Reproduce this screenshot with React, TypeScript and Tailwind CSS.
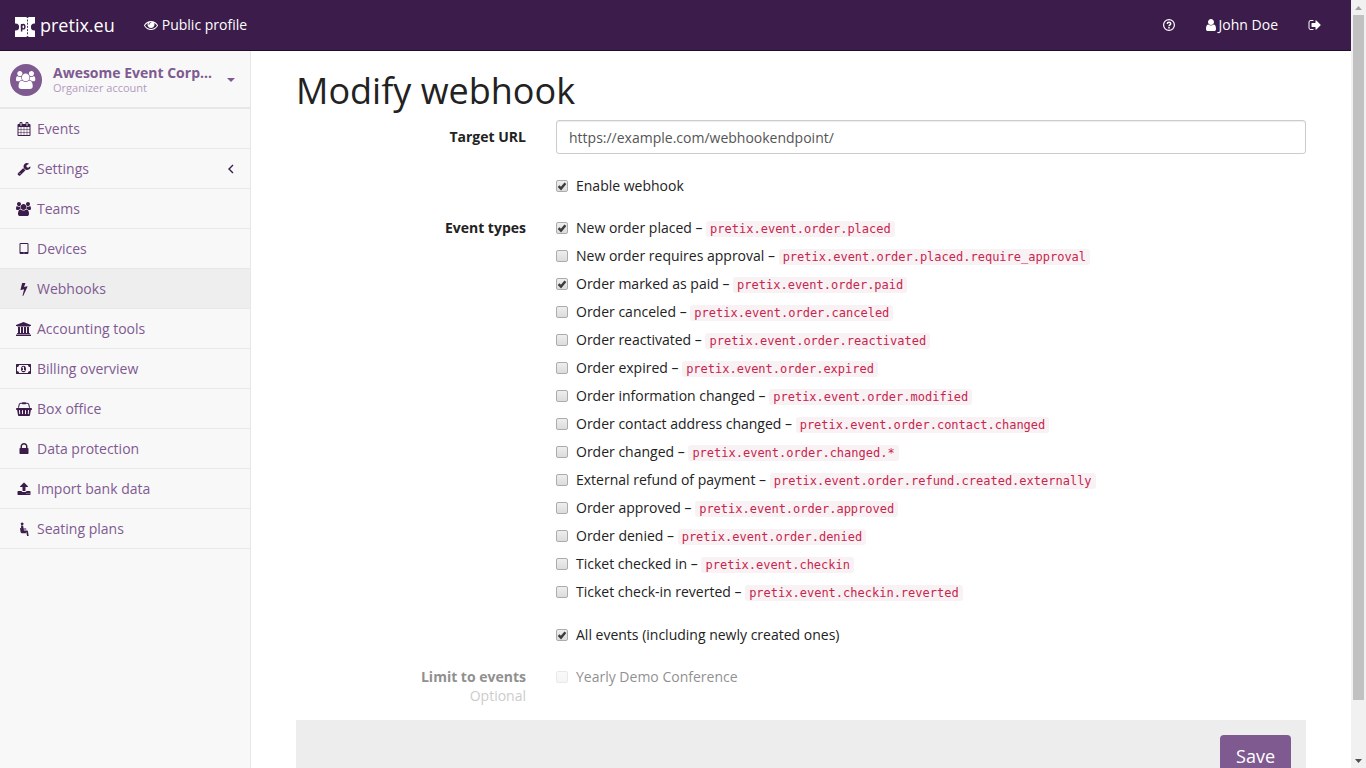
import React from "react";

type Glyph = { w?: number; d: string };

const glyphs: Record<string, Glyph> = {
  user: { w: 1536, d: "M1408 1399q0 109-62.5 187t-150.5 78h-854q-88 0-150.5-78t-62.5-187q0-85 8.5-160.5t31.5-152 58.5-131 94-89 134.5-34.5q131 128 313 128t313-128q76 0 134.5 34.500t94 89 58.500 131 31.500 152 8.500 160.500zm-256-887q0 159-112.500 271.500t-271.500 112.500-271.500-112.500-112.500-271.500 112.500-271.500 271.500-112.500 271.500 112.500 112.500 271.500z" },
  eye: { d: "M1664 960q-152-236-381-353 61 104 61 225 0 185-131.5 316.5t-316.5 131.5-316.5-131.5-131.5-316.5q0-121 61-225-229 117-381 353 133 205 333.5 326.5t434.5 121.5 434.5-121.5 333.5-326.5zm-720-384q0-20-14-34t-34-14q-125 0-214.5 89.5t-89.5 214.5q0 20 14 34t34 14 34-14 14-34q0-86 61-147t147-61q20 0 34-14t14-34zm848 384q0 34-20 69-140 230-376.5 368.5t-499.5 138.5-499.5-139-376.5-368q-20-35-20-69t20-69q140-229 376.5-368t499.5-139 499.5 139 376.5 368q20 35 20 69z" },
  signOut: { d: "M704 1440q0 4 1 20t.5 26.5-3 23.5-10 19.5-20.5 6.5h-320q-119 0-203.5-84.5t-84.5-203.5v-704q0-119 84.5-203.5t203.5-84.5h320q13 0 22.5 9.5t9.5 22.5q0 4 1 20t.5 26.5-3 23.5-10 19.5-20.5 6.5h-320q-66 0-113 47t-47 113v704q0 66 47 113t113 47h312l11.5 1 11.5 3 8 5.5 7 9 2 13.5zm928-544q0 26-19 45l-544 544q-19 19-45 19t-45-19-19-45v-288h-448q-26 0-45-19t-19-45v-384q0-26 19-45t45-19h448v-288q0-26 19-45t45-19 45 19l544 544q19 19 19 45z" },
  calendar: { d: "M192 1664h288v-288h-288v288zm352 0h320v-288h-320v288zm-352-352h288v-320h-288v320zm352 0h320v-320h-320v320zm-352-384h288v-288h-288v288zm736 736h320v-288h-320v288zm-384-736h320v-288h-320v288zm768 736h288v-288h-288v288zm-384-352h320v-320h-320v320zm-352-864v-288q0-13-9.5-22.5t-22.5-9.5h-64q-13 0-22.5 9.5t-9.5 22.5v288q0 13 9.5 22.5t22.5 9.5h64q13 0 22.5-9.5t9.5-22.5zm736 864h288v-320h-288v320zm-384-384h320v-288h-320v288zm384 0h288v-288h-288v288zm32-480v-288q0-13-9.5-22.5t-22.5-9.5h-64q-13 0-22.5 9.5t-9.5 22.5v288q0 13 9.5 22.5t22.5 9.5h64q13 0 22.5-9.5t9.5-22.5zm384-64v1280q0 52-38 90t-90 38h-1408q-52 0-90-38t-38-90v-1280q0-52 38-90t90-38h128v-96q0-66 47-113t113-47h64q66 0 113 47t47 113v96h384v-96q0-66 47-113t113-47h64q66 0 113 47t47 113v96h128q52 0 90 38t38 90z" },
  wrench: { d: "M448 1472q0-26-19-45t-45-19-45 19-19 45 19 45 45 19 45-19 19-45zm644-420l-682 682q-37 37-90 37-52 0-91-37l-106-108q-38-36-38-90 0-53 38-91l681-681q39 98 114.5 173.5t173.5 114.5zm634-435q0 39-23 106-47 134-164.5 217.5t-258.5 83.5q-185 0-316.5-131.5t-131.5-316.5 131.5-316.5 316.5-131.5q58 0 121.5 16.5t107.5 46.5q16 11 16 28t-16 28l-293 169v224l193 107q5-3 79-48.5t135.5-81 70.5-35.5q15 0 23.5 10t8.5 25z" },
  users: { w: 1920, d: "M593 896q-162 5-265 128h-134q-82 0-138-40.5t-56-118.5q0-353 124-353 6 0 43.5 21t97.5 42.5 119 21.5q67 0 133-23-5 37-5 66 0 139 81 256zm1071 637q0 120-73 189.5t-194 69.5h-874q-121 0-194-69.5t-73-189.5q0-53 3.5-103.5t14-109 26.5-108.5 43-97.5 62-81 85.5-53.5 111.5-20q10 0 43 21.5t73 48 107 48 135 21.5 135-21.5 107-48 73-48 43-21.5q61 0 111.5 20t85.5 53.5 62 81 43 97.5 26.5 108.5 14 109 3.5 103.5zm-1024-1277q0 106-75 181t-181 75-181-75-75-181 75-181 181-75 181 75 75 181zm704 384q0 159-112.5 271.5t-271.5 112.5-271.5-112.5-112.5-271.5 112.5-271.5 271.5-112.5 271.5 112.5 112.5 271.5zm576 225q0 78-56 118.5t-138 40.5h-134q-103-123-265-128 81-117 81-256 0-29-5-66 66 23 133 23 59 0 119-21.5t97.5-42.5 43.5-21q124 0 124 353zm-128-609q0 106-75 181t-181 75-181-75-75-181 75-181 181-75 181 75 75 181z" },
  tablet: { d: "M960 1408q0-26-19-45t-45-19-45 19-19 45 19 45 45 19 45-19 19-45zm384-160v-960q0-13-9.5-22.5t-22.5-9.5h-832q-13 0-22.5 9.5t-9.5 22.5v960q0 13 9.5 22.5t22.5 9.5h832q13 0 22.5-9.5t9.5-22.5zm128-960v1088q0 66-47 113t-113 47h-832q-66 0-113-47t-47-113v-1088q0-66 47-113t113-47h832q66 0 113 47t47 113z" },
  bolt: { d: "M1333 566q18 20 7 44l-540 1157q-13 25-42 25-4 0-14-2-17-5-25.5-19t-4.5-30l197-808-406 101q-4 1-12 1-18 0-31-11-18-15-13-39l201-825q4-14 16-23t28-9h328q19 0 32 12.5t13 29.5q0 8-5 18l-171 463 396-98q8-2 12-2 19 0 34 15z" },
  bank: { w: 1920, d: "M960 0l960 384v128h-128q0 26-20.5 45t-48.5 19h-1526q-28 0-48.5-19t-20.5-45h-128v-128zM256 640h256v768h128v-768h256v768h128v-768h256v768h128v-768h256v768h59q28 0 48.5 19t20.5 45v64h-1664v-64q0-26 20.5-45t48.5-19h59v-768zM1851 1600q28 0 48.5 19t20.5 45v128h-1920v-128q0-26 20.5-45t48.5-19h1782z" },
  money: { w: 1920, d: "M768 1152h384v-96h-128v-448h-114l-148 137 77 80q42-37 55-57h2v288h-128v96zM1280 896q0 70-21 142t-59.5 134-101.5 101-138 39-138-39-101.5-101-59.5-134-21-142 21-142 59.5-134 101.5-101 138-39 138 39 101.5 101 59.5 134 21 142zM1792 1152v-512q-106 0-181-75t-75-181h-1152q0 106-75 181t-181 75v512q106 0 181 75t75 181h1152q0-106 75-181t181-75zM1920 320v1152q0 26-19 45t-45 19h-1792q-26 0-45-19t-19-45v-1152q0-26 19-45t45-19h1792q26 0 45 19t19 45z" },
  basket: { w: 2048, d: "M1920 768q53 0 90.5 37.5t37.5 90.5-37.5 90.5-90.5 37.5h-15l-115 662q-8 46-44 76t-82 30h-1280q-46 0-82-30t-44-76l-115-662h-15q-53 0-90.5-37.5t-37.5-90.5 37.5-90.5 90.5-37.5h1792zM485 1568q26-2 43.5-22.5t15.5-46.5l-32-416q-2-26-22.5-43.5t-46.5-15.5-43.5 22.5-15.5 46.5l32 416q2 25 20.5 42t43.5 17h5zM896 1504v-416q0-26-19-45t-45-19-45 19-19 45v416q0 26 19 45t45 19 45-19 19-45zM1280 1504v-416q0-26-19-45t-45-19-45 19-19 45v416q0 26 19 45t45 19 45-19 19-45zM1632 1509l32-416q2-26-15.5-46.5t-43.5-22.5-46.5 15.5-22.5 43.5l-32 416q-2 26 15.5 46.5t43.5 22.5h5q25 0 43.5-17t20.5-42zM476 324l-93 412h-132l101-441q19-88 89-143.5t160-55.5h167q0-26 19-45t45-19h384q26 0 45 19t19 45h167q90 0 160 55.5t89 143.5l101 441h-132l-93-412q-11-44-45.5-72t-79.5-28h-167q0 26-19 45t-45 19h-384q-26 0-45-19t-19-45h-167q-45 0-79.5 28t-45.5 72z" },
  lock: { d: "M640 768h512v-192q0-106-75-181t-181-75-181 75-75 181v192zm832 96v576q0 40-28 68t-68 28h-960q-40 0-68-28t-28-68v-576q0-40 28-68t68-28h32v-192q0-184 132-316t316-132 316 132 132 316v192h32q40 0 68 28t28 68z" },
  upload: { d: "M1344 1472q0-26-19-45t-45-19-45 19-19 45 19 45 45 19 45-19 19-45zm256 0q0-26-19-45t-45-19-45 19-19 45 19 45 45 19 45-19 19-45zm128-224v320q0 40-28 68t-68 28h-1472q-40 0-68-28t-28-68v-320q0-40 28-68t68-28h427q21 56 70.5 92t110.5 36h256q61 0 110.5-36t70.5-92h427q40 0 68 28t28 68zm-325-648q-17 40-59 40h-256v448q0 26-19 45t-45 19h-256q-26 0-45-19t-19-45v-448h-256q-42 0-59-40-17-39 14-69l448-448q18-19 45-19t45 19l448 448q31 30 14 69z" },
  seat: { d: "M660 60a180 180 0 1 1-1 0zM520 460q150-60 270 30l50 330h350v130h-330l20 130h390q120 0 130 100l90 610-200 30-90-500h-480q-160 0-190-150zM380 760h110l80 470q20 90 110 90h460v110h-490q-160 0-190-150z" },
};

function Icon({ name, className = "h-[14px]" }: { name: string; className?: string }) {
  const g = glyphs[name];
  return (
    <svg aria-hidden="true" viewBox={`0 0 ${g.w ?? 1792} 1792`} className={`shrink-0 ${className}`} fill="currentColor">
      <path d={g.d} />
    </svg>
  );
}

const navItems = [
  { label: "Events", icon: "calendar" },
  { label: "Settings", icon: "wrench", expandable: true },
  { label: "Teams", icon: "users" },
  { label: "Devices", icon: "tablet" },
  { label: "Webhooks", icon: "bolt", active: true },
  { label: "Accounting tools", icon: "bank" },
  { label: "Billing overview", icon: "money" },
  { label: "Box office", icon: "basket" },
  { label: "Data protection", icon: "lock" },
  { label: "Import bank data", icon: "upload" },
  { label: "Seating plans", icon: "seat" },
];

const eventTypes: { label: string; code: string; checked?: boolean }[] = [
  { label: "New order placed", code: "pretix.event.order.placed", checked: true },
  { label: "New order requires approval", code: "pretix.event.order.placed.require_approval" },
  { label: "Order marked as paid", code: "pretix.event.order.paid", checked: true },
  { label: "Order canceled", code: "pretix.event.order.canceled" },
  { label: "Order reactivated", code: "pretix.event.order.reactivated" },
  { label: "Order expired", code: "pretix.event.order.expired" },
  { label: "Order information changed", code: "pretix.event.order.modified" },
  { label: "Order contact address changed", code: "pretix.event.order.contact.changed" },
  { label: "Order changed", code: "pretix.event.order.changed.*" },
  { label: "External refund of payment", code: "pretix.event.order.refund.created.externally" },
  { label: "Order approved", code: "pretix.event.order.approved" },
  { label: "Order denied", code: "pretix.event.order.denied" },
  { label: "Ticket checked in", code: "pretix.event.checkin" },
  { label: "Ticket check-in reverted", code: "pretix.event.checkin.reverted" },
];

function Check({ checked, disabled, children }: { checked?: boolean; disabled?: boolean; children: React.ReactNode }) {
  return (
    <label className={`flex h-5 items-center gap-2 ${disabled ? "opacity-50" : ""}`}>
      <span className="grid size-3 shrink-0">
        <input
          type="checkbox"
          defaultChecked={checked}
          disabled={disabled}
          className="peer col-start-1 row-start-1 size-3 appearance-none rounded-xs border border-[#acacac] bg-linear-to-b from-[#eeeeee] to-[#dcdcdc] disabled:opacity-50"
        />
        <svg viewBox="0 0 12 12" aria-hidden="true" className="pointer-events-none invisible col-start-1 row-start-1 size-3 peer-checked:visible">
          <path d="M2.6 6.2 5 8.6 9.4 3.2" fill="none" stroke="#3c3c3c" strokeWidth="2.4" />
        </svg>
      </span>
      <span>{children}</span>
    </label>
  );
}

function Row({ label, children }: { label?: React.ReactNode; children: React.ReactNode }) {
  return (
    <div className="grid grid-cols-[230px_minmax(0,1fr)] gap-x-[30px]">
      <div className="text-right">{label}</div>
      <div>{children}</div>
    </div>
  );
}

function Logo() {
  return (
    <svg viewBox="0 0 20 20" className="size-5" aria-hidden="true">
      <path fill="#fff" d="M0 0h11.500a1 1 0 0 0 2 0H20v6.500h-.6a3.500 3.500 0 0 0 0 7H20V20h-6.500a1 1 0 0 0-2 0H0v-6.500h.6a3.500 3.500 0 0 0 0-7H0z" />
      <path d="M12.500 2.500v15" stroke="#3b1c4a" strokeWidth=".9" strokeDasharray="2 1.200" />
      <path d="M6.600 14.500V7" stroke="#3b1c4a" strokeWidth="1.500" />
      <ellipse cx="8.200" cy="9.700" rx="1.700" ry="2.200" fill="none" stroke="#3b1c4a" strokeWidth="1.400" />
    </svg>
  );
}

export default function App() {
  return (
    <div className="flex h-screen overflow-hidden bg-white font-['Open_Sans',sans-serif] text-sm leading-5 text-[#222222]">
      <div className="flex min-w-0 flex-1 flex-col">
        <header className="flex h-[51px] shrink-0 items-center justify-between border-b border-[#1f0f27] bg-[#3b1c4a] text-white">
          <div className="flex items-center">
            <a href="#home" className="flex items-end gap-[5px] pr-[14px] pl-[15px] text-lg leading-6">
              <Logo />
              <span>pretix.eu</span>
            </a>
            <a href="#profile" className="flex items-center gap-1 px-[15px]">
              <Icon name="eye" />
              Public profile
            </a>
          </div>
          <nav className="flex items-center pr-[14px]">
            <a href="#help" aria-label="Help" className="px-[15px]">
              <svg viewBox="0 0 12 12" className="size-3" fill="none" stroke="currentColor" aria-hidden="true">
                <circle cx="6" cy="6" r="5.400" strokeWidth="1.200" />
                <path d="M4.200 4.800C4.400 2.900 7.700 2.900 7.700 4.700 7.700 5.900 6 5.700 6 7.200M6 8v1.500" strokeWidth="1.500" />
              </svg>
            </a>
            <a href="#account" className="flex items-center gap-[2px] px-[15px]">
              <Icon name="user" />
              John Doe
            </a>
            <a href="#logout" aria-label="Log out" className="px-[15px]">
              <Icon name="signOut" />
            </a>
          </nav>
        </header>
        <div className="flex min-h-0 flex-1">
          <aside className="w-[251px] shrink-0 border-r border-[#e7e7e7] bg-[#f8f8f8] text-[#7f5a91]">
            <button type="button" className="flex h-[58px] w-full items-center border-b-2 border-[#e7e7e7] pt-[2px] pr-[15px] pl-[10px] text-left">
              <span className="mr-[11px] flex size-8 items-center justify-center rounded-full bg-[#7f5a91] text-white">
                <Icon name="users" className="h-[18px]" />
              </span>
              <span className="flex-1">
                <span className="block leading-4 font-bold">Awesome Event Corp…</span>
                <span className="block text-[11px] leading-[14px] text-[#b39abf]">Organizer account</span>
              </span>
              <svg viewBox="0 0 8 4" className="h-1 w-2" fill="currentColor" aria-hidden="true"><path d="M0 0h8L4 4z" /></svg>
            </button>
            <ul>
              {navItems.map((item) => (
                <li key={item.label} className="border-b border-[#e7e7e7]">
                  <a href="#nav" className={`flex h-[39px] items-center pr-[15px] pl-[14px] ${item.active ? "bg-[#eeeeee]" : ""}`}>
                    <span className="mr-1 flex w-[19px] justify-center text-[#3b1c4a]">
                      <Icon name={item.icon} />
                    </span>
                    <span className="flex-1">{item.label}</span>
                    {item.expandable && (
                      <svg viewBox="0 0 8 10" className="h-[10px] w-2" fill="none" stroke="#3b1c4a" strokeWidth="1.400" aria-hidden="true">
                        <path d="M6 1 2 5l4 4" />
                      </svg>
                    )}
                  </a>
                </li>
              ))}
            </ul>
          </aside>
          <main className="min-w-0 flex-1 px-[45px]">
            <h1 className="pt-5 text-[36px] leading-10">Modify webhook</h1>
            <form className="pt-[9px]">
              <Row label={<label htmlFor="url" className="block pt-[7px] font-bold">Target URL</label>}>
                <input
                  id="url"
                  type="text"
                  defaultValue="https://example.com/webhookendpoint/"
                  className="block h-[34px] w-full rounded-[3px] border border-[#cccccc] bg-white px-3 text-[#555555] shadow-[inset_0_1px_1px_rgba(0,0,0,0.075)]"
                />
              </Row>
              <div className="pt-[22px]">
                <Row><Check checked>Enable webhook</Check></Row>
              </div>
              <fieldset className="pt-[22px]">
                <Row label={<span className="font-bold">Event types</span>}>
                  <div className="flex flex-col gap-2">
                    {eventTypes.map((t) => (
                      <Check key={t.code} checked={t.checked}>
                        {t.label} – <code className="rounded-[3px] bg-[#f9f2f4] px-1 py-px font-['DejaVu_Sans_Mono',monospace] text-[12px] text-[#c7254e]">{t.code}</code>
                      </Check>
                    ))}
                  </div>
                </Row>
              </fieldset>
              <div className="pt-[23px]">
                <Row><Check checked>All events (including newly created ones)</Check></Row>
              </div>
              <fieldset className="pt-[22px]">
                <Row
                  label={
                    <div className="leading-[19px]">
                      <div className="font-bold text-[#909090]">Limit to events</div>
                      <div className="text-[#cccccc]">Optional</div>
                    </div>
                  }
                >
                  <Check disabled>Yearly Demo Conference</Check>
                </Row>
              </fieldset>
              <div className="mt-[15px] flex justify-end bg-[#ededed] p-[15px]">
                <button type="submit" className="rounded-[4px] bg-[#7f5a91] px-4 py-[9px] text-lg leading-6 text-white">Save</button>
              </div>
            </form>
          </main>
        </div>
      </div>
      <div aria-hidden="true" className="flex w-[15px] shrink-0 flex-col items-center bg-[#f1f1f1]">
        <svg viewBox="0 0 15 15" className="size-[15px] shrink-0"><path d="M4 10h7L7.500 6z" fill="#a3a3a3" /></svg>
        <div className="w-[11px] flex-[685] bg-[#c1c1c1]" />
        <div className="flex-[53]" />
        <svg viewBox="0 0 15 15" className="size-[15px] shrink-0"><path d="M4 6h7L7.500 10z" fill="#505050" /></svg>
      </div>
    </div>
  );
}
